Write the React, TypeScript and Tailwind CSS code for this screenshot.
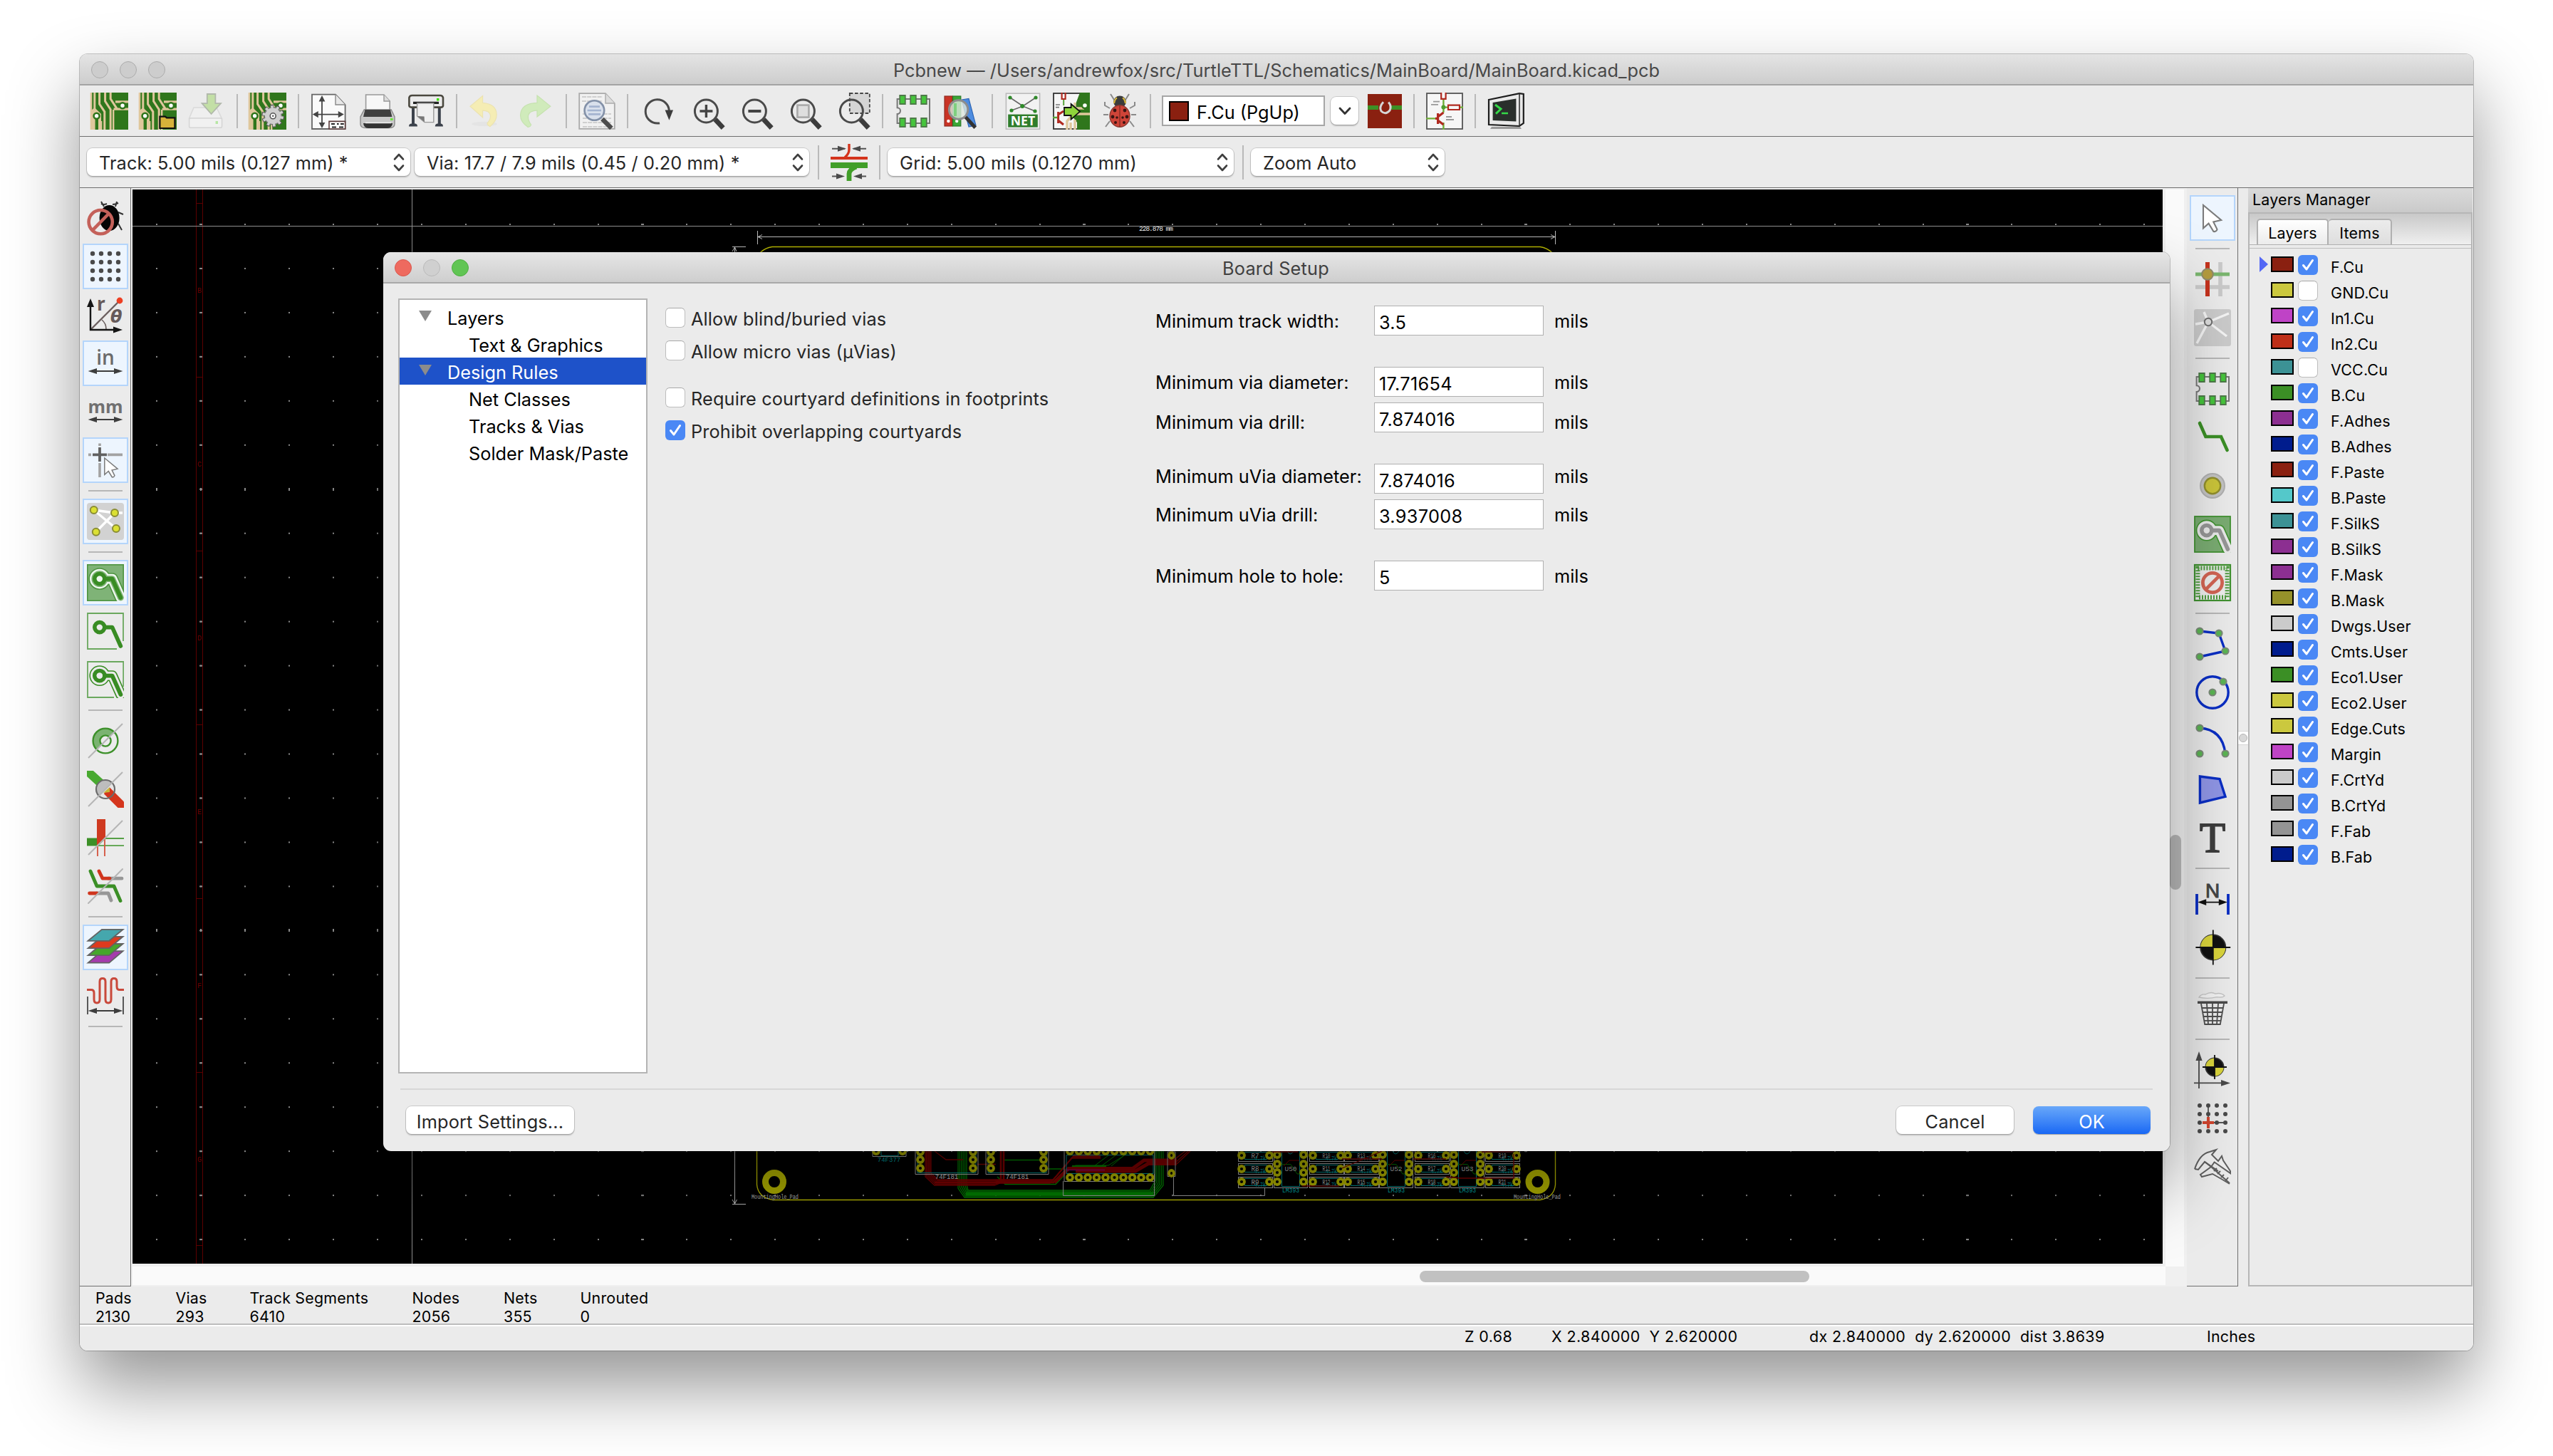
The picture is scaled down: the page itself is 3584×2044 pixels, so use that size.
import React from 'react';

type P = { children?: React.ReactNode };

const Svg = ({ children }: P) => (
  <svg viewBox="0 0 26 26" className="size-[52px] shrink-0 overflow-visible" fill="none">
    {children}
  </svg>
);

/* ---------- shared drawing parts ---------- */

const BoardArt = () => (
  <g>
    <rect width="26" height="26" fill="#2f761c" />
    <g stroke="#dfc79c" strokeWidth="1.5">
      <path d="M2.4 0V13M5.8 0V8l3.6 5.4V26M9.8 0V6l3.8 5.8V26M13.6 0V4.4l4.4 6.8" />
      <path d="M0 0V26M3.8 18V26M7 20V26" strokeWidth="1.3" />
      <path d="M15.8 11.6H26M17 6.4H26" strokeWidth="1.6" />
      <path d="M15.6 12V26" strokeWidth="1.2" />
    </g>
    <path d="M0 12.5L2.4 10.5L7 15V26H5V18H2.8V26H0Z" fill="#dfc79c" />
    <path d="M3.8 17V26" stroke="#2f761c" strokeWidth="1.6" />
    <circle cx="22" cy="9.1" r="2" fill="#fff" stroke="#2f761c" strokeWidth="1.3" />
    <circle cx="3.8" cy="16.4" r="2" fill="#fff" stroke="#2f761c" strokeWidth="1.3" />
  </g>
);

const Lens = () => (
  <g>
    <circle cx="12.700" cy="13" r="8" stroke="#4a4a4a" strokeWidth="1.5" />
    <path d="M19 18.8L24.600 24.8" stroke="#3c3c3c" strokeWidth="3.4" />
  </g>
);

const Chip = () => (
  <g>
    <path d="M1.8 4.5H24.5V21.5H1.8V15a2.2 2.2 0 0 0 0-4.400Z" stroke="#777" strokeWidth="1" />
    <g fill="#46c53c" stroke="#4d7a48" strokeWidth=".9">
      <path d="M3.6 2H7.400V8H3.6ZM11.100 2H14.900V8H11.100ZM18.600 2H22.400V8H18.600ZM3.6 18H7.400V24H3.6ZM11.100 18H14.900V24H11.100ZM18.600 18H22.400V24H18.600Z" />
    </g>
  </g>
);

const Pointer = ({ x = 0, y = 0, s = 1 }: { x?: number; y?: number; s?: number }) => (
  <path
    transform={`translate(${x} ${y}) scale(${s})`}
    d="M0 0V15.400L3.600 12.200L6.900 17.600Q8.700 18 9.300 16.200L6.800 11.200L12 10Z"
    fill="#fff"
    stroke="#7b7b7b"
    strokeWidth="1"
  />
);

const Target = ({ cx, cy, r, ex }: { cx: number; cy: number; r: number; ex: number }) => (
  <g transform={`translate(${cx} ${cy})`}>
    <circle r={r} fill="#111" stroke="#333" strokeWidth=".9" />
    <path d={`M0 0V${-r}A${r} ${r} 0 0 0 ${-r} 0ZM0 0V${r}A${r} ${r} 0 0 0 ${r} 0Z`} fill="#d9d43c" />
    <path d={`M0 ${-ex}V${ex}M${-ex} 0H${ex}`} stroke="#111" strokeWidth=".9" />
  </g>
);

const ZoneTrace = ({ c, w = 2.8 }: { c: string; w?: number }) => (
  <g stroke={c} strokeWidth={w}>
    <circle cx="8.900" cy="10.300" r="3.500" />
    <path d="M12.500 10.300H17.800L23.700 23.500" strokeLinecap="round" strokeLinejoin="round" />
  </g>
);

/* clips wide halo strokes to the icon square */
const Clip = ({ children }: P) => (
  <svg width="26" height="26" viewBox="0 0 26 26" overflow="hidden">
    {children}
  </svg>
);

const Slash = () => <path d="M1 25L25 1" stroke="#b5b5b5" strokeWidth="1" />;
const Node = ({ x, y }: { x: number; y: number }) => (
  <circle cx={x} cy={y} r="2.300" fill="#5ab552" stroke="#7c8a7a" strokeWidth="1" />
);
const HArrow = ({ y, c = '#3d3d3d' }: { y: number; c?: string }) => (
  <g>
    <path d={`M4 ${y}H22`} stroke={c} strokeWidth="1" />
    <path d={`M.8 ${y}L7 ${y - 2}V${y + 2}ZM25.200 ${y}L19 ${y - 2}V${y + 2}Z`} fill={c} />
  </g>
);

/* ---------- top toolbar icons ---------- */

const top: Record<string, React.ReactNode> = {
  board: <BoardArt />,
  open: (
    <g>
      <BoardArt />
      <path d="M14.200 16.800H18L19 17.700H24.700V25H14.200Z" fill="#d6b23a" stroke="#111" strokeWidth="1.100" />
    </g>
  ),
  save: (
    <g>
      <path d="M4 10.500H20L23.600 18H.8Z" fill="#efefef" stroke="#dadada" strokeWidth=".8" />
      <rect x=".8" y="18" width="23" height="6.600" rx="1" fill="#f1f1f1" stroke="#d6d6d6" strokeWidth=".8" />
      <rect x="19.300" y="20" width="1.700" height="2" fill="#b7e6a4" />
      <path d="M13.400 1H19.200V7.600H23L16.300 15L9.800 7.600H13.400Z" fill="#c3dfa6" stroke="#b1b8ab" strokeWidth=".9" />
    </g>
  ),
  setup: (
    <g>
      <BoardArt />
      <circle cx="16.600" cy="16.400" r="6.300" stroke="#555" strokeWidth="3.400" strokeDasharray="2.300 1.660" />
      <circle cx="16.600" cy="16.400" r="6" fill="#cfcfcf" stroke="#777" strokeWidth=".8" />
      <circle cx="16.600" cy="16.400" r="6.300" stroke="#cfcfcf" strokeWidth="2.200" strokeDasharray="1.700 2.260" strokeDashoffset="-.3" />
      <circle cx="16.600" cy="16.400" r="2" fill="#fff" stroke="#555" strokeWidth=".8" />
      <circle cx="16.600" cy="16.400" r=".6" fill="#555" />
    </g>
  ),
  page: (
    <g>
      <path d="M1 1.300H17.500L24.300 8.500V25.500H1Z" fill="#fafafa" stroke="#666" strokeWidth=".9" />
      <path d="M17.500 1.300V8.500H24.300" fill="#e8e8e8" stroke="#888" strokeWidth=".7" />
      <path d="M8 4V23M3.500 15.300H21" stroke="#444" strokeWidth=".9" />
      <path d="M8 2L10.200 6.200H5.800ZM8 25L10.200 21H5.800ZM1.400 15.300L5.400 13V17.600ZM23.400 15.300L19.400 13V17.600Z" fill="#444" />
      <path d="M13 20.200H24.300V25.500H13Z" fill="#fff" stroke="#5b3a3a" strokeWidth=".8" />
      <path d="M14.500 22H17M18.500 22H19.800M21 22H23.400M15 24.200H18M20 24.200H23" stroke="#222" strokeWidth="1" />
    </g>
  ),
  print: (
    <g>
      <path d="M4.800 13V1.500H17.500L21.600 6V13Z" fill="#f7f7f7" stroke="#999" strokeWidth=".8" />
      <path d="M17.500 1.500V6H21.600" stroke="#999" strokeWidth=".7" fill="#ddd" />
      <path d="M3.600 12H22.600L25 17V22Q25 24.800 21 24.800H5Q1 24.800 1 22V17Z" fill="#c9c9c9" stroke="#8a8a8a" strokeWidth=".7" />
      <path d="M4.200 12H22L23.200 17H3Z" fill="#3f3f3f" />
      <path d="M3 21.500H23.600Q23 25 20 25H6.500Q3.500 25 3 21.500Z" fill="#333" />
      <path d="M4.500 21.200H22.500" stroke="#eee" strokeWidth=".9" />
      <rect x="22" y="18" width="1.800" height="1.500" fill="#6de53e" />
    </g>
  ),
  plot: (
    <g>
      <path d="M4 10V23M22.400 10V23" stroke="#3c424c" strokeWidth="2" />
      <path d="M1 23.800Q1 21.800 3 21.800H5.500Q7 22 7 23.800ZM19.400 23.800Q19.400 22 21 21.800H23.500Q25 22 25 23.800Z" fill="#3c424c" />
      <path d="M1.200 3.500Q1.600 2 3.200 2H23Q24.600 2 25 3.500V9.300Q24.700 10.300 23.500 10.300H2.700Q1.400 10.300 1.200 9.300Z" fill="#ececec" stroke="#4a483f" strokeWidth="1.300" />
      <path d="M4 7.200H22" stroke="#222" strokeWidth="1.700" />
      <path d="M6.800 7.500H18.400V20.800H12L6.800 16.500Z" fill="#efefef" stroke="#999" strokeWidth=".7" />
      <path d="M12 20.600L11.800 16.800L7 16.500Z" fill="#777" />
      <rect x="20.500" y="4" width="1.700" height="1.700" fill="#3be000" />
    </g>
  ),
  undo: (
    <g>
      <ellipse cx="11" cy="22" rx="9" ry="1.600" fill="#e4e4e4" />
      <path d="M9.800 2.300V7.200Q19.600 8 19.600 15.600Q19.600 20 15 23.800Q13 22.900 13 21.500Q15.700 18.500 15.200 15.800Q14.500 12.700 9.800 12.600V17.400L1 9.600Z" fill="#f5edb4" stroke="#ece3b0" strokeWidth=".6" />
    </g>
  ),
  redo: (
    <g>
      <path d="M14 2L23.400 9.600L14 17V12.400Q8.400 12.700 7.800 16Q7.400 19.500 9.800 22.500Q9.500 24 7.600 24.200Q2 20.500 2.300 15.500Q3 7.500 14 7.200Z" fill="#d0ebbb" stroke="#c6e2b0" strokeWidth=".6" />
    </g>
  ),
  find: (
    <g>
      <path d="M.6.6H19L25.400 7.500V25.400H.6Z" fill="#f1f1f1" stroke="#aaa" strokeWidth=".9" />
      <path d="M19 .6V7.500H25.400" stroke="#aaa" strokeWidth=".7" fill="#ddd" />
      <path d="M2.500 3H17M2.500 6H17M3 15H23M3 18H23M3 21H23M3 24H20" stroke="#c4c4c4" strokeWidth=".8" strokeDasharray="3 .6" />
      <circle cx="11.200" cy="12.500" r="6.900" fill="#d9e0ec" stroke="#8391a8" strokeWidth="1.300" />
      <path d="M7.500 9.800H15M6.300 12.500H16M7 15.200H15.500" stroke="#a5b4d0" strokeWidth="1.300" />
      <path d="M16.700 18.500L23.200 25" stroke="#4d4d4d" strokeWidth="3.200" />
    </g>
  ),
  refresh: (
    <g>
      <path d="M14 21.400Q13.300 21.600 12.500 21.500A8.300 8.300 0 1 1 20.700 13" stroke="#4a4a4a" strokeWidth="1.500" />
      <path d="M17.800 12.300H23.500L20.700 19.400Z" fill="#3c3c3c" />
    </g>
  ),
  zin: (
    <g>
      <Lens />
      <path d="M12.700 8.500V17.500M8.200 13H17.200" stroke="#444" strokeWidth="1.700" />
    </g>
  ),
  zout: (
    <g>
      <Lens />
      <path d="M8.200 13H17.200" stroke="#444" strokeWidth="1.900" />
    </g>
  ),
  zfit: (
    <g>
      <Lens />
      <rect x="8.700" y="8.800" width="8" height="8.500" stroke="#aaa" strokeWidth="1.300" fill="#dedede" />
    </g>
  ),
  zsel: (
    <g>
      <rect x="11.400" y=".5" width="14" height="14" fill="#d5d5d5" stroke="#444" strokeWidth=".9" strokeDasharray="2.300 1.300" />
      <Lens />
    </g>
  ),
  chip: <Chip />,
  lib: (
    <g>
      <rect x="1" y="2.500" width="5.500" height="21" fill="#c93325" stroke="#8f2a20" strokeWidth=".6" />
      <rect x="6.800" y="2.500" width="5.600" height="21" fill="#3ba636" stroke="#2c7a29" strokeWidth=".6" />
      <path d="M13 5L18 4.200L23 23L18 24Z" fill="#4d8ce0" stroke="#2e66b5" strokeWidth=".6" />
      <circle cx="3.700" cy="20" r="1.100" fill="#fff" />
      <circle cx="9.600" cy="20" r="1.100" fill="#fff" />
      <circle cx="10.800" cy="12" r="6.600" fill="#dfe9df" fillOpacity=".8" stroke="#8d8d8d" strokeWidth="1.500" />
      <path d="M8.500 7.500V16.500" stroke="#7fcf7f" strokeWidth="2" />
      <path d="M15.800 17.200L22.600 24.600" stroke="#333" strokeWidth="2.500" />
    </g>
  ),
  net: (
    <g>
      <rect x="1.200" y=".6" width="23.600" height="25" fill="#f2f2f2" stroke="#bbb" strokeWidth=".8" />
      <path d="M4 3.500L13 9.500L22 3.500M5 12.500L13 9.500L21.500 13" stroke="#666" strokeWidth=".8" />
      <g fill="#2f8a2a">
        <circle cx="4" cy="3.500" r="1.300" />
        <circle cx="22" cy="3.500" r="1.300" />
        <circle cx="12.600" cy="9.500" r="1.500" />
        <circle cx="5" cy="12.500" r="1.300" />
        <circle cx="21.500" cy="13" r="1.300" />
      </g>
      <rect x="2.600" y="15.300" width="20.800" height="9" fill="#2f7d2b" />
      <text x="13" y="23" fontSize="8.800" fontWeight="700" textAnchor="middle" fill="#fff" fontFamily="Open Sans, sans-serif">NET</text>
    </g>
  ),
  update: (
    <g>
      <rect x=".5" y=".5" width="25" height="25" fill="#f6f6f6" stroke="#333" strokeWidth=".9" />
      <path d="M19 0H26V26H17V21L14 17L16 8Z" fill="#2f761c" />
      <path d="M10 26V20L14.500 15H26M12.500 26V21M15.500 26V19M22 11L15.500 11V7" stroke="#dfc79c" strokeWidth="1.700" />
      <circle cx="22.500" cy="9" r="2" fill="#fff" stroke="#2f761c" strokeWidth="1.200" />
      <path d="M6.300 0V4.500H8.800V0" stroke="#b02a20" strokeWidth="1.100" />
      <path d="M7.600 5V9" stroke="#58a33b" strokeWidth="1" />
      <path d="M2 8.500H5M2 10.300H4.500" stroke="#777" strokeWidth=".8" />
      <path d="M0 17.500H3" stroke="#58a33b" strokeWidth="1.200" />
      <path d="M3.800 13.500V21.500M3.800 15.500L7.500 13M3.800 19.500L7.500 22.500" stroke="#b02a20" strokeWidth="1.500" />
      <path d="M8 10.500H12.800V8L19 13.300L12.800 18.800V16H8Z" fill="#8fd43c" stroke="#111" strokeWidth=".9" />
    </g>
  ),
  bug: (
    <g>
      <path d="M9 5L6.500 1M17 5L19.500 1M6 11L2.500 9V6.500M20 11L23.500 9V6.500M5 15.500H1.500M21 15.500H24.500M6 20L3 24M20 20L23 24" stroke="#8a8a8a" strokeWidth="1" />
      <ellipse cx="13" cy="6.500" rx="4.400" ry="4.200" fill="#3c3c3c" />
      <path d="M9 7.500Q9.500 4.500 11 3.800M17 7.500Q16.500 4.500 15 3.800" stroke="#d8b93a" strokeWidth="1.100" />
      <ellipse cx="13" cy="16.500" rx="7" ry="7.600" fill="#cf4438" stroke="#8b3a32" strokeWidth=".7" />
      <path d="M13 9V24" stroke="#7a2a22" strokeWidth=".6" />
      <g fill="#3a1512">
        <circle cx="9.500" cy="12.500" r="1.200" />
        <circle cx="16.500" cy="12.500" r="1.200" />
        <circle cx="8" cy="17" r="1.200" />
        <circle cx="18" cy="17" r="1.200" />
        <circle cx="11" cy="17.500" r=".9" />
        <circle cx="15" cy="17.500" r=".9" />
        <circle cx="10" cy="21" r="1" />
        <circle cx="16" cy="21" r="1" />
      </g>
    </g>
  ),
  copper: (
    <g>
      <rect x="1" y="1" width="24" height="24" fill="#8a2010" />
      <path d="M1 10.500H25" stroke="#3d8f25" strokeWidth="3" />
      <rect x="8.500" y="8" width="9" height="6" fill="#8a2010" />
      <path d="M12 6.600Q8.800 10 10.500 13Q13.500 16 16.500 12.500Q18 9.500 15.600 6.800" stroke="#d6d6d6" strokeWidth="1.500" />
    </g>
  ),
  sch: (
    <g>
      <rect x=".5" y=".5" width="25" height="25" fill="#f6f6f6" stroke="#555" strokeWidth=".9" />
      <path d="M12.200 4.500V14M12.200 10.300H26M12.200 21V26M0 18.200H7" stroke="#6fae36" strokeWidth="1.200" />
      <circle cx="12.200" cy="10.300" r="1.500" fill="#4f9d2f" />
      <path d="M10.600 0V4.400H13.800V0M15.500 8.800H23.500V12H15.500Z" stroke="#b02a20" strokeWidth="1.100" fill="#f6f6f6" />
      <path d="M8.300 14.500V22M8.300 17L12.200 14M8.300 19.500L12.200 22.500M6.500 18.200H8" stroke="#b02a20" strokeWidth="1.600" />
      <path d="M5 6.300H9.500M3.500 8.400H8.500M14 17H18M14 19H19.500" stroke="#999" strokeWidth=".9" />
    </g>
  ),
  term: (
    <g>
      <path d="M3 24H23L24 25.500H2Z" fill="#999" />
      <path d="M1 5L22.500.6L25.400 1V21.500L22.500 23.500L1 22.500Z" fill="#e9e9e9" stroke="#1c1c1c" strokeWidth="1.100" />
      <path d="M22.500 .6V23.500" stroke="#333" strokeWidth=".8" />
      <path d="M3.800 7L20.200 4.300V20.200L3.800 19.500Z" fill="#2a2f2c" />
      <path d="M5.500 8.500L9.500 11.500L6 14.800" stroke="#35d948" strokeWidth="1.500" />
      <path d="M10 14.500H14.500" stroke="#35d948" strokeWidth="1.300" />
    </g>
  ),
  diff: (
    <g>
      <path d="M0 10H26" stroke="#d4341c" strokeWidth="2" />
      <path d="M0 15H26" stroke="#419f29" strokeWidth="4" />
      <path d="M13 0V4Q13 7 10 9.500" stroke="#d4341c" strokeWidth="1.700" />
      <path d="M18 16Q13 18 13 21V26" stroke="#419f29" strokeWidth="3.400" />
      <path d="M1 3.400H10M16 3.400H25M1 22.700H8M18 22.700H25" stroke="#555" strokeWidth="1" />
      <path d="M5 1.400L11 3.400L5 5.400ZM21 1.400L15 3.400L21 5.400ZM4 20.700L10 22.700L4 24.700ZM22 20.700L16 22.700L22 24.700Z" fill="#4a4a4a" />
    </g>
  ),
};

/* ---------- left toolbar icons ---------- */

const dots = [4, 10, 16, 22];

const left: Record<string, React.ReactNode> = {
  drc: (
    <g>
      <path d="M12 5L10 1.500M20 5L21 1.500M9 7L6 8M22 9L25.500 10.500M22 17L24.500 21.500M14 3Q12 4 10 3M18 3.500Q20 3.500 22 2.500" stroke="#333" strokeWidth="1" />
      <ellipse cx="15.800" cy="13" rx="7" ry="9" fill="#050505" />
      <circle cx="9.600" cy="15.800" r="8.300" stroke="#c4615a" strokeWidth="2.300" />
      <path d="M4 21.600L15.300 10" stroke="#c4615a" strokeWidth="2.300" />
    </g>
  ),
  grid: (
    <g fill="#4a4a4a">
      {dots.map((y) => dots.map((x) => <circle key={`${x}-${y}`} cx={x} cy={y} r="1.600" />))}
    </g>
  ),
  polar: (
    <g>
      <path d="M2.500 23.500L22 4" stroke="#6b6060" strokeWidth="1.200" />
      <path d="M10.500 16.500Q13.500 19 13.500 23" stroke="#6b6060" strokeWidth=".8" />
      <path d="M2.500 5V23.500H20" stroke="#151515" strokeWidth="1.200" />
      <path d="M2.500 1.500L5 7.500H0ZM25 23.500L18.500 21.300V25.700Z" fill="#151515" />
      <circle cx="23" cy="3" r="2.200" fill="#ee4023" />
      <text x="7" y="10" fontSize="13" fontWeight="700" fill="#655a5a" fontFamily="Open Sans, sans-serif">r</text>
      <text x="16.500" y="18.600" fontSize="12" fontWeight="700" fontStyle="italic" fill="#655a5a" fontFamily="DejaVu Sans, sans-serif">θ</text>
    </g>
  ),
  inch: (
    <g>
      <text x="13" y="14" fontSize="14" fontWeight="600" textAnchor="middle" fill="#6b6b6b" fontFamily="Open Sans, sans-serif">in</text>
      <HArrow y={18.500} />
    </g>
  ),
  mm: (
    <g>
      <text x="13" y="14" fontSize="12.500" fontWeight="700" textAnchor="middle" fill="#707070" fontFamily="Open Sans, sans-serif">mm</text>
      <HArrow y={18.500} />
    </g>
  ),
  cursor: (
    <g>
      <path d="M1 9.200H3M14.500 9.200H25M9 1.300V3M9 15V25" stroke="#a2a2a2" strokeWidth="1.800" />
      <path d="M4 9.200H14M9 4V14" stroke="#606060" strokeWidth="1.900" />
      <Pointer x={12.400} y={11.500} s={0.760} />
    </g>
  ),
  rats: (
    <g>
      <rect width="26" height="26" rx="2" fill="#d2d2d2" />
      <path d="M4.800 5L20.500 18M6.300 20.400L19.500 7M4.800 5L19.500 7H25" stroke="#fff" strokeWidth="1.700" />
      {[[4.900, 5], [19.500, 7], [6.400, 20.400], [20.500, 18]].map(([x, y]) => (
        <circle key={`${x}`} cx={x} cy={y} r="2.500" fill="#dbe033" stroke="#8a8d33" strokeWidth="1" />
      ))}
    </g>
  ),
  zfill: (
    <Clip>
      <rect x=".4" y=".4" width="25.200" height="25.200" fill="#7fb377" stroke="#4d9440" strokeWidth=".8" />
      <ZoneTrace c="#4d9440" w={8.400} />
      <ZoneTrace c="#eef7ee" w={6.800} />
      <ZoneTrace c="#7fb377" w={4.400} />
      <ZoneTrace c="#388c23" />
      <circle cx="8.900" cy="10.300" r="2.100" fill="#eef7ee" />
    </Clip>
  ),
  znone: (
    <g>
      <path d="M25.500 20V.5H.5V25.500H21" stroke="#6aa85e" strokeWidth=".9" />
      <ZoneTrace c="#388c23" />
    </g>
  ),
  zoutl: (
    <Clip>
      <path d="M25.600 18V.5H.5V25.500H19" stroke="#6aa85e" strokeWidth=".9" />
      <ZoneTrace c="#388c23" w={7.400} />
      <ZoneTrace c="#ebebeb" w={5.800} />
      <ZoneTrace c="#388c23" w={2.900} />
      <circle cx="8.900" cy="10.300" r="2.100" fill="#ebebeb" />
    </Clip>
  ),
  pad: (
    <g>
      <path d="M6.600 19.400A9 9 0 0 1 19.400 6.600L15.800 10.200A4 4 0 0 0 10.200 15.800Z" fill="#7bb371" />
      <circle cx="13" cy="13" r="8.700" stroke="#3c9029" strokeWidth="1.200" />
      <circle cx="13" cy="13" r="3.800" stroke="#3c9029" strokeWidth="1.200" />
      <Slash />
    </g>
  ),
  via: (
    <Clip>
      <path d="M0 0L11 10" stroke="#48a930" strokeWidth="6" />
      <circle cx="13" cy="13" r="6.500" fill="#e6e6e6" />
      <path d="M8.300 17.700A6.700 6.700 0 0 1 17.700 8.300Z" fill="#bdbdbd" />
      <path d="M14 14L27 27" stroke="#d4351d" strokeWidth="6" />
      <path d="M11.500 15.500L16 11.500V15Z" fill="#c6b53a" />
      <circle cx="13" cy="13" r="6.500" stroke="#6b6b6b" strokeWidth="1.100" />
      <Slash />
    </Clip>
  ),
  track: (
    <g>
      <path d="M0 13.200H13.500L8 18.800H0Z" fill="#3b8f26" />
      <path d="M13 13.500H26M8 18.600H26" stroke="#56a046" strokeWidth=".9" />
      <path d="M7 0H13V13L7 19Z" fill="#cf3a20" />
      <path d="M7.500 18V26M12.500 13V26" stroke="#d4533d" strokeWidth=".9" />
      <Slash />
    </g>
  ),
  contrast: (
    <g strokeWidth="2.400" strokeLinecap="round" strokeLinejoin="round">
      <path d="M15 7.600H24.500M7 18H15L17 23" stroke="#979797" />
      <path d="M8.500 2.500L11 7.600H16M1.800 18H7" stroke="#d0351d" />
      <path d="M2.500 2.500L7 13H19L23.500 23.300" stroke="#3b8f26" />
      <Slash />
    </g>
  ),
  layers: (
    <g stroke="#636363" strokeWidth=".9">
      <path d="M.8 23.800L10.500 15.600H25.300L15.600 23.800Z" fill="#a53bad" />
      <path d="M.8 18.600L10.500 10.500H25.300L15.600 18.600Z" fill="#45a62b" />
      <path d="M.8 13.600L10.500 5.400H25.300L15.600 13.600Z" fill="#dd3a1e" />
      <path d="M.8 8.400L10.500.4H25.300L15.600 8.400Z" fill="#45a7ad" />
    </g>
  ),
  meander: (
    <g>
      <path d="M0 8.800H3Q5 8.800 5 11V15.500Q5 18 7 18T9 15.500V3Q9 .8 11 .8T13 3V15.500Q13 18 15 18T17 15.500V3Q17 .8 19 .8T21 3V6.500Q21 8.800 23 8.800H26" stroke="#c9493b" strokeWidth="1.500" />
      <path d="M.5 13.500V26M25.500 13.500V26" stroke="#4a4a4a" strokeWidth=".9" />
      <HArrow y={23.500} />
    </g>
  ),
};

/* ---------- right toolbar icons ---------- */

const right: Record<string, React.ReactNode> = {
  arrow: <Pointer x={6.500} y={4} s={1.050} />,
  hilite: (
    <g>
      <path d="M18.500 1V25M1 18.500H25" stroke="#c9c9c9" strokeWidth="2.800" />
      <path d="M9.500 1V25" stroke="#c4321d" strokeWidth="3" />
      <path d="M1 9.500H25" stroke="#79b56e" strokeWidth="2.600" />
      <circle cx="9.500" cy="9.500" r="3.900" fill="#b39b3e" stroke="#8f8a6a" strokeWidth="1" />
    </g>
  ),
  localrats: (
    <g>
      <rect width="26" height="26" rx="1.600" fill="#cbcbcb" />
      <path d="M10 9L7 2M10 9L24.500 3M10 9L23 19M10 9L2 24M10 9L1 10.500" stroke="#f4f4f4" strokeWidth="1.700" />
      <circle cx="10" cy="9" r="2.600" fill="#dcdcdc" stroke="#6f6f6f" strokeWidth="1" />
    </g>
  ),
  chip: <Chip />,
  route: <path d="M4 3L8.200 12.500H19L23.300 22" stroke="#3b8f26" strokeWidth="2.300" strokeLinecap="round" />,
  via: (
    <g>
      <circle cx="13" cy="13" r="8.500" fill="#c3c3c3" stroke="#b0b0b0" strokeWidth="1" />
      <circle cx="13" cy="13" r="5.600" fill="#cbc53a" stroke="#918f2e" strokeWidth="1.200" />
    </g>
  ),
  zone: (
    <Clip>
      <rect x=".5" y=".5" width="25" height="25" fill="#7aac72" stroke="#419231" strokeWidth=".9" />
      <ZoneTrace c="#419231" w={8} />
      <ZoneTrace c="#e9e9e9" w={6.400} />
      <ZoneTrace c="#969696" />
      <circle cx="8.900" cy="10.300" r="2" fill="#e9e9e9" />
    </Clip>
  ),
  keepout: (
    <g>
      <rect x=".5" y=".5" width="25" height="25" fill="#ededed" stroke="#419231" strokeWidth="1.100" />
      <rect x="2.700" y="2.700" width="20.600" height="20.600" stroke="#4f9d40" strokeWidth="3" strokeDasharray="1 1" />
      <circle cx="13" cy="13" r="8.600" fill="#ededed" />
      <circle cx="13" cy="13" r="6.800" stroke="#d26454" strokeWidth="2.400" />
      <path d="M8.300 17.700L17.700 8.300" stroke="#d26454" strokeWidth="2.400" />
    </g>
  ),
  line: (
    <g>
      <path d="M4 4L17.500 5.500L22 18L4 22" stroke="#0a2ec4" strokeWidth="1.700" />
      <Node x={4} y={4} /><Node x={17.500} y={5.500} /><Node x={22} y={18} /><Node x={4} y={22} />
    </g>
  ),
  circle: (
    <g>
      <circle cx="13" cy="13" r="11.100" stroke="#0a2ec4" strokeWidth="1.700" />
      <Node x={13} y={13} /><Node x={20.500} y={5.500} />
    </g>
  ),
  arc: (
    <g>
      <path d="M4 4Q20 5 22 22" stroke="#0a2ec4" strokeWidth="1.700" />
      <Node x={4} y={4} /><Node x={4} y={22} /><Node x={22} y={22} />
    </g>
  ),
  poly: <path d="M4.200 4L18 5.800L22 18.200L4.200 22.500Z" fill="#9096e6" stroke="#0a2ec4" strokeWidth="1.700" />,
  text: <text x="13" y="23" fontSize="29.500" textAnchor="middle" fill="#3d3d3d" stroke="#3d3d3d" strokeWidth=".9" fontFamily="Liberation Serif, serif">T</text>,
  dim: (
    <g>
      <text x="13" y="12" fontSize="14" textAnchor="middle" fill="#444" stroke="#444" strokeWidth=".5" fontFamily="Liberation Sans, sans-serif">N</text>
      <path d="M2 9.500V24M24 9.500V24" stroke="#0a2ec4" strokeWidth="1.900" />
      <path d="M5 15.300H21" stroke="#111" strokeWidth=".9" />
      <path d="M2.600 15.300L8.600 13.100V17.500ZM23.400 15.300L17.400 13.100V17.500Z" fill="#111" />
    </g>
  ),
  target: <Target cx={13.400} cy={13} r={8.800} ex={12.200} />,
  trash: (
    <g>
      <path d="M3.500 5Q5 2.500 8 3Q12 .8 15 2.600Q19 1.500 21.500 4Q20 5.500 16 4.800Q10 6.500 3.500 5Z" fill="#f2f2f2" stroke="#c4c4c4" strokeWidth=".7" />
      <path d="M2.500 8.600H23.500" stroke="#4a4a4a" strokeWidth="1.700" />
      <path d="M5 9.500L7.600 24H18.400L21 9.500M5.500 12.500H20.500M6 15.500H20M6.600 18.500H19.400M7 21.400H19M9 9.500L10 24M13 9.500V24M17 9.500L16 24" stroke="#4f4f4f" strokeWidth=".9" />
    </g>
  ),
  origin: (
    <g>
      <path d="M3.500 5V26M0 22.200H21" stroke="#4a4a4a" strokeWidth=".9" />
      <path d="M3.500 0L5.800 6.500H1.200ZM25.500 22.200L19 20V24.400Z" fill="#4a4a4a" />
      <Target cx={14.500} cy={11} r={6.300} ex={8.500} />
    </g>
  ),
  gridorg: (
    <g fill="#4a4a4a">
      <path d="M10 4V16H22" stroke="#555" strokeWidth=".9" fill="none" />
      {dots.map((y) => dots.map((x) => <circle key={`${x}-${y}`} cx={x} cy={y} r="1.500" />))}
      <path d="M6 16H14M10 12V20" stroke="#d2452f" strokeWidth="2" />
    </g>
  ),
  caliper: (
    <g stroke="#5f5f5f" strokeWidth="1" fill="#efefef">
      <path d="M.5 14.500Q4 4 11 2.500L15.500 1L12.500 4.500L17 9L19.500 5.500L20.500 8.500L25.500 16V17.500L14 9.500" />
      <path d="M.5 14.500L3 15L7.500 9.500L12 13L4.500 18.500L5.500 20L13 18L20 22L25 25" />
      <path d="M12 13L25 24.500M14.500 9.500L12 13M16 14L14 16M18.500 16L16.500 18M21 18.500L19 20.500M24 20.500L22 23M7.500 9.500L17 16" fill="none" />
    </g>
  ),
};

const VSep = () => <div className="h-[48px] w-[2px] bg-[#b9b9b9]" />;

const topItems = ['board', 'open', 'save', '|', 'setup', '|', 'page', 'print', 'plot', '|', 'undo', 'redo', '|', 'find', '|', 'refresh', 'zin', 'zout', 'zfit', 'zsel', '|', 'chip', 'lib', '|', 'net', 'update', 'bug', '|'];

const leftItems = ['drc', '*grid', 'polar', '*inch', 'mm', '*cursor', '|', '*rats', '|', '*zfill', 'znone', 'zoutl', '|', 'pad', 'via', 'track', 'contrast', '|', '*layers', 'meander', '|'];

const rightItems = ['*arrow', '|', 'hilite', 'localrats', '|', 'chip', 'route', 'via', 'zone', 'keepout', '|', 'line', 'circle', 'arc', 'poly', 'text', '|', 'dim', 'target', '|', 'trash', '|', 'origin', 'gridorg', 'caliper'];

const Column = ({ items, icons }: { items: string[]; icons: Record<string, React.ReactNode> }) => (
  <>
    {items.map((k, i) =>
      k === '|' ? (
        <div key={i} className="my-[6px] h-[2px] w-[48px] shrink-0 bg-[#b7b7b7]" />
      ) : (
        <div
          key={i}
          className={
            k[0] === '*'
              ? 'flex size-[64px] shrink-0 items-center justify-center border-2 border-[#b4d5fb] bg-[#edf5fe]'
              : 'flex size-[64px] shrink-0 items-center justify-center'
          }
        >
          <Svg>{icons[k.replace('*', '')]}</Svg>
        </div>
      ),
    )}
  </>
);

const Stepper = () => (
  <svg viewBox="0 0 16 26" className="h-[26px] w-[16px]" fill="none" stroke="#3f3f3f" strokeWidth="2.600" strokeLinecap="round" strokeLinejoin="round">
    <path d="M2 8.500L8 2L14 8.500M2 17.500L8 24L14 17.500" />
  </svg>
);

const Select = ({ w, children }: P & { w: string }) => (
  <div className={`flex h-[39px] items-center justify-between rounded-[8px] bg-white pr-[8px] pl-[17px] text-[25.3px] shadow-[0_0_0_1px_rgba(0,0,0,0.14),0_2px_2px_rgba(0,0,0,0.2)] ${w}`}>
    <span className="pt-[3px] leading-[36px] whitespace-pre text-[#262626]">{children}</span>
    <Stepper />
  </div>
);

const Check = ({ on }: { on: boolean }) =>
  on ? (
    <div className="flex size-[28px] shrink-0 items-center justify-center rounded-[6px] bg-[#4a88f5]">
      <svg viewBox="0 0 28 28" className="size-[28px]" fill="none" stroke="#fff" strokeWidth="3" strokeLinecap="round" strokeLinejoin="round">
        <path d="M7.500 14.500L12 20L20.500 7.500" />
      </svg>
    </div>
  ) : (
    <div className="size-[28px] shrink-0 rounded-[6px] border border-[#bdbdbd] border-t-[#a8a8a8] bg-white" />
  );

const layers: [string, string, boolean][] = [
  ['F.Cu', '#8a2010', true],
  ['GND.Cu', '#cbc83e', false],
  ['In1.Cu', '#bf43c6', true],
  ['In2.Cu', '#bf2f18', true],
  ['VCC.Cu', '#3c9295', false],
  ['B.Cu', '#3b8f25', true],
  ['F.Adhes', '#8c2f91', true],
  ['B.Adhes', '#001c8d', true],
  ['F.Paste', '#8a2010', true],
  ['B.Paste', '#54c8ca', true],
  ['F.SilkS', '#3c9295', true],
  ['B.SilkS', '#8c2f91', true],
  ['F.Mask', '#8c2f91', true],
  ['B.Mask', '#95912a', true],
  ['Dwgs.User', '#cbcbcb', true],
  ['Cmts.User', '#001c8d', true],
  ['Eco1.User', '#3b8f25', true],
  ['Eco2.User', '#cbc83e', true],
  ['Edge.Cuts', '#cbc83e', true],
  ['Margin', '#bf43c6', true],
  ['F.CrtYd', '#cbcbcb', true],
  ['B.CrtYd', '#949494', true],
  ['F.Fab', '#949494', true],
  ['B.Fab', '#001c8d', true],
];

/* ---------- board canvas ---------- */

const Pads = ({ xs, ys, rx = 5.500 }: { xs: number[]; ys: number[]; rx?: number }) => (
  <g>
    {xs.map((x) =>
      ys.map((y) => (
        <ellipse key={`${x}-${y}`} cx={x} cy={y} rx={rx - 1.500} ry="4" stroke="#adad00" strokeWidth="3.800" fill="#000" />
      )),
    )}
  </g>
);

const range = (n: number) => Array.from({ length: n }, (_, i) => i);

const Canvas = () => (
  <svg viewBox="186 266 2850 1508" className="h-[1508px] w-[2850px] shrink-0 bg-black" fill="none">
    <defs>
      <pattern id="dots" x="219" y="314" width="62" height="61.960" patternUnits="userSpaceOnUse">
        <rect width="2" height="2" fill="#8a8a8a" />
      </pattern>
    </defs>
    <rect x="186" y="266" width="2850" height="1508" fill="url(#dots)" />
    <g fill="#8a8a8a">
      {[280, 900, 1520, 2140, 2760].map((x) => range(24).map((r) => <rect key={`${x}-${r}`} x={x} y={314 + r * 61.960} width="4" height="2" />))}
      {range(46).map((c) => <rect key={c} x={219 + c * 62} y="685" width="2" height="4" />)}
      {range(46).map((c) => <rect key={c} x={219 + c * 62} y="1304" width="2" height="4" />)}
    </g>

    {/* drawing sheet frame */}
    <path d="M275.500 266V1774M284.500 266V1774M275 285.500H285M275 529.500H285M275 773.500H285M275 1017.500H285M275 1261.500H285M275 1505.500H285M275 1748.500H285" stroke="#5c0000" />
    <g fill="#6b0000" fontSize="10" fontFamily="Liberation Mono, monospace">
      {['B', 'C', 'D', 'E', 'F', 'G'].map((l, i) => (
        <text key={l} x="277" y={411 + i * 244}>{l}</text>
      ))}
    </g>
    <path d="M186 317.500H3036M578.500 266V1774" stroke="#8f8f8f" />

    {/* dimensions */}
    <g stroke="#bdbdbd">
      <path d="M1063.500 324V343M2183.500 324V343M1064 332.500H2183M1064 332.500L1070 329.500M1064 332.500L1070 335.500M2183 332.500L2177 329.500M2183 332.500L2177 335.500" />
      <path d="M1028 346.500H1047M1031.500 346V1690M1028 1690.500H1047M1031.500 347L1028 353M1031.500 347L1034 353M1031.500 1690L1028 1684M1031.500 1690L1034.500 1684" />
    </g>
    <text x="1623" y="324" fontSize="9.500" textLength="48" textAnchor="middle" fill="#f0f0f0" fontFamily="Liberation Mono, monospace">228.878 mm</text>

    {/* board outline */}
    <path d="M1062.500 367Q1064 350 1084 346.500H2162Q2182 350 2183.500 367V1663Q2182 1681 2162 1684.500H1085Q1064 1681 1062.500 1663Z" stroke="#b5b500" strokeWidth="1.400" />
    <g stroke="#b0b000" strokeWidth="9">
      <circle cx="1087" cy="1659" r="12.500" />
      <circle cx="2158.500" cy="1659" r="12.500" />
    </g>
    <g fill="#b8b8b8" fontSize="8.500" textAnchor="middle" fontFamily="Liberation Mono, monospace">
      <text x="1088" y="1683" textLength="66" lengthAdjust="spacingAndGlyphs">MountingHole_Pad</text>
      <text x="2158" y="1683" textLength="66" lengthAdjust="spacingAndGlyphs">MountingHole_Pad</text>
    </g>

    {/* bottom copper */}
    <g stroke="#008000">
      {range(6).map((i) => (
        <path key={i} d={`M${1345 + i * 2.400} 1610V${1668 - i}L${1354 + i} ${1681 - i * 2}H${1619 - i}L${1633 - i * 2.400} ${1664 - i}V1610`} strokeWidth="1.300" />
      ))}
      <path d="M1356 1676H1619" strokeWidth="5" />
      <path d="M1400 1652L1411 1662.500H1482L1494 1650M1404 1655L1412 1659.500H1478L1490 1648M1410 1628.500H1460M1470 1641H1494" strokeWidth="1.300" />
      <path d="M1500 1640L1510 1636H1556L1588 1616M1536 1637L1556 1622M1546 1637L1566 1622M1560 1637L1578 1622" />
      <path d="M1505 1637.500H1553" strokeWidth="3" />
    </g>

    {/* front copper */}
    <g stroke="#7d0000">
      {range(6).map((i) => (
        <path key={i} d={`M${1299 + i * 1.600} 1610V${1652 - i}L${1312 + i} ${1664 - i * 1.600}H${1396}L1404 ${1661 - i}H${1474 + i}L${1504 + i} ${1626 - i}H1545`} strokeWidth="1.300" />
      ))}
      <path d="M1312 1660H1480M1405 1660V1612M1409 1658V1612" strokeWidth="2.600" />
      <path d="M1312 1616L1328 1628H1352M1372 1634.500H1398" strokeWidth="1.300" />
      <path d="M1480 1660L1500 1640.500H1590L1606 1629H1652M1510 1644H1594L1612 1633.500H1652" strokeWidth="5" />
      <path d="M1648 1634L1668 1616M1652 1634L1671 1616M1643 1632L1664 1616" strokeWidth="1.500" />
    </g>
    <path d="M1497 1642.500H1551" stroke="#8a008a" />

    {/* DIP packages */}
    <g stroke="#a5a5a5">
      <path d="M1225 1610V1623.500H1272V1610M1285 1610V1648.500H1373V1610M1384 1610V1648.500H1472V1610M1494 1610V1658.500H1621V1610" />
      <path d="M1492.500 1658V1678.500H1620.500V1648M1647.500 1651V1678.500H1775.500V1667M1639 1617H1650V1651.500H1639Z" stroke="#9d9d9d" />
    </g>
    <g stroke="#008a8a">
      <path d="M1288 1610V1646.500H1370V1610M1387 1610V1646.500H1469V1610M1497 1621.500H1619V1647.500H1497ZM1237 1610V1622.500H1261V1610" />
    </g>
    <Pads xs={[1292, 1366, 1391, 1465]} ys={[1617, 1628, 1640]} />
    <Pads xs={[1230, 1267]} ys={[1616]} />
    <Pads xs={range(10).map((i) => 1502 + i * 12.500)} ys={[1616, 1653]} />
    <Pads xs={[1644.500]} ys={[1622, 1647]} rx={5} />

    {/* resistor and comparator array */}
    {[1738, 1838, 1887, 1986, 2085].map((x, c) => (
      <g key={x}>
        {[1615, 1633, 1652].map((y, r) => (
          <g key={y}>
            <rect x={x + 0.500} y={y + 0.500} width="48" height="15" stroke="#a5a5a5" />
            <path d={`M${x + 9.500} ${y + 2.500}H${x + 40.500}V${y + 12.500}H${x + 9.500}Z`} stroke="#008a8a" />
            <text x={x + 31} y={y + 14} fontSize="9" textLength="16" lengthAdjust="spacingAndGlyphs" textAnchor="middle" fill="#009c9c" fontFamily="Liberation Mono, monospace">4.7k</text>
            <text x={x + 24} y={y + 11} fontSize="10" textLength="11" lengthAdjust="spacingAndGlyphs" textAnchor="middle" fill="#b0b0b0" fontFamily="Liberation Mono, monospace">{`R${7 + c * 3 + r}`}</text>
          </g>
        ))}
        <Pads xs={[x + 5, x + 44]} ys={[1622, 1641, 1659]} />
      </g>
    ))}
    {[['U50', 1788], ['U52', 1936], ['U53', 2036]].map(([n, x0]) => {
      const x = Number(x0);
      return (
        <g key={n}>
          <path d={`M${x + 0.500} 1610V1667.500H${x + 47.500}V1610`} stroke="#a5a5a5" />
          <path d={`M${x + 11.500} 1616V1665.500H${x + 36.500}V1616M${x + 19} 1616Q${x + 23} 1624 ${x + 28} 1616`} stroke="#008a8a" />
          <path d={`M${x + 8} 1634.500H${x + 24}L${x + 33} 1648H${x + 40}`} stroke="#007000" />
          <path d={`M${x + 14} 1637L${x + 22} 1629H${x + 36}`} stroke="#7d0000" />
          <text x={x + 24} y="1644" fontSize="9.500" textAnchor="middle" fill="#b0b0b0" fontFamily="Liberation Mono, monospace">{n}</text>
          <text x={x + 24} y="1674" fontSize="9.500" textLength="24" lengthAdjust="spacingAndGlyphs" textAnchor="middle" fill="#00acac" fontFamily="Liberation Mono, monospace">LM393</text>
          <Pads xs={[x + 5, x + 42]} ys={[1621, 1634, 1646, 1659]} />
        </g>
      );
    })}
    <path d="M1786 1617H1822M1884 1627H1940M1984 1627H2030M2080 1617H2125M1828 1665H1880M1884 1640L1940 1616M2030 1652L2050 1654H2125V1620" stroke="#7d0000" strokeWidth="1.300" />
    <g fontSize="9" textAnchor="middle" fontFamily="Liberation Mono, monospace">
      <text x="1248" y="1631" fill="#009c9c">74F377</text>
      <text x="1329" y="1655" fill="#c0c0c0">74F181</text>
      <text x="1428" y="1655" fill="#c0c0c0">74F181</text>
    </g>
  </svg>
);

/* ---------- dialog ---------- */

const tree: [string, boolean][] = [
  ['Layers', true],
  ['Text & Graphics', false],
  ['Design Rules', true],
  ['Net Classes', false],
  ['Tracks & Vias', false],
  ['Solder Mask/Paste', false],
];

const rules: { label: string; value: string; row: string; text: string }[] = [
  { label: 'Minimum track width:', value: '3.5', row: 'mb-[44px]', text: 'pt-[2px]' },
  { label: 'Minimum via diameter:', value: '17.71654', row: 'mb-[8px]', text: 'pt-[2px]' },
  { label: 'Minimum via drill:', value: '7.874016', row: 'mb-[44px]', text: 'pt-[13px]' },
  { label: 'Minimum uVia diameter:', value: '7.874016', row: 'mb-[8px]', text: 'pb-[7px]' },
  { label: 'Minimum uVia drill:', value: '3.937008', row: 'mb-[44px]', text: 'pt-[2px]' },
  { label: 'Minimum hole to hole:', value: '5', row: '', text: 'pt-[2px]' },
];

const Option = ({ on, children, cls }: P & { on: boolean; cls: string }) => (
  <div className={`flex h-[28px] items-center ${cls}`}>
    <Check on={on} />
    <span className="pt-[3px] pl-[8px] text-[25.3px] leading-[30px] tracking-[0.13px] text-[#262626]">{children}</span>
  </div>
);

const Dialog = () => (
  <div className="absolute top-[278px] left-[426px] flex h-[1262px] w-[2508px] flex-col overflow-hidden rounded-[11px] bg-[#ebebeb]">
    <div className="relative flex h-[44px] shrink-0 items-center justify-center border-b-2 border-[#a9a9a9] bg-linear-to-b from-[#e6e6e6] to-[#cecece]">
      <div className="absolute top-[10px] left-[16px] flex gap-[16px]">
        <div className="size-[24px] rounded-full border border-[#d9574d] bg-[#ee6a5f]" />
        <div className="size-[24px] rounded-full border border-[#b9b9b9] bg-[#d0d0d0]" />
        <div className="size-[24px] rounded-full border border-[#4fae42] bg-[#61c554]" />
      </div>
      <span className="pt-[4px] pr-[2px] text-[25.3px] leading-[36px] tracking-[0.2px] text-[#404040]">Board Setup</span>
    </div>
    <div className="flex h-[1110px] shrink-0 pt-[21px] pl-[21px]">
      <div className="h-[1088px] w-[350px] shrink-0 border-2 border-[#b4b4b4] bg-white py-[5px]">
        {tree.map(([name, group]) => (
          <div key={name} className={name === 'Design Rules' ? 'flex h-[38px] items-center bg-[#1e52c9] text-white' : 'flex h-[38px] items-center text-black'}>
            {group ? <div className="mb-[4px] ml-[27px] h-0 w-0 border-x-[9px] border-t-[15px] border-x-transparent border-t-[#8c8c8c]" /> : null}
            <span className={group ? 'pt-[4px] pl-[22px] text-[25.3px]' : 'pt-[4px] pl-[97px] text-[25.3px]'}>{name}</span>
          </div>
        ))}
      </div>
      <div className="w-[712px] shrink-0 pt-[13px] pl-[25px]">
        <Option on={false} cls="">Allow blind/buried vias</Option>
        <Option on={false} cls="mt-[18px]">Allow micro vias (μVias)</Option>
        <Option on={false} cls="mt-[38px]">Require courtyard definitions in footprints</Option>
        <Option on cls="mt-[18px]">Prohibit overlapping courtyards</Option>
      </div>
      <div className="flex flex-col pt-[10px]">
        {rules.map((r) => (
          <div key={r.label} className={`flex h-[42px] items-center text-[25.3px] leading-[30px] ${r.row}`}>
            <span className={`w-[308px] pl-[1px] tracking-[0.05px] ${r.text}`}>{r.label}</span>
            <div className="flex h-[42px] w-[238px] items-center border-[1.5px] border-[#b0b0b0] bg-white pt-[6px] pl-[6px] tracking-[0.3px]">{r.value}</div>
            <span className={`pl-[15px] ${r.text}`}>mils</span>
          </div>
        ))}
      </div>
    </div>
    <div className="mx-[24px] mt-[20px] h-[2px] shrink-0 bg-[#d7d7d7]" />
    <div className="mt-[23px] flex items-center pr-[27px] pl-[32px] text-[25.3px] leading-[30px] tracking-[0.15px]">
      <div className="flex h-[39px] w-[236px] items-center justify-center rounded-[8px] bg-white pt-[4px] text-[#262626] shadow-[0_0_0_1px_rgba(0,0,0,0.14),0_2px_2px_rgba(0,0,0,0.2)]">Import Settings...</div>
      <div className="grow" />
      <div className="flex h-[39px] w-[165px] items-center justify-center rounded-[8px] bg-white pt-[4px] text-[#262626] shadow-[0_0_0_1px_rgba(0,0,0,0.14),0_2px_2px_rgba(0,0,0,0.2)]">Cancel</div>
      <div className="ml-[27px] flex h-[39px] w-[165px] items-center justify-center rounded-[8px] bg-linear-to-b from-[#68a7f9] to-[#1867f4] pt-[4px] text-white shadow-[0_1px_1px_rgba(0,0,0,0.3)]">OK</div>
    </div>
  </div>
);

const stats: [string, string, string][] = [
  ['Pads', '2130', 'w-[112.500px]'],
  ['Vias', '293', 'w-[104px]'],
  ['Track Segments', '6410', 'w-[228px]'],
  ['Nodes', '2056', 'w-[128.500px]'],
  ['Nets', '355', 'w-[107.500px]'],
  ['Unrouted', '0', 'w-[120px]'],
];

export default function App() {
  return (
    <div className="h-[2044px] w-[3584px] overflow-hidden bg-white pt-[76px] pl-[112px] font-['Inter',sans-serif] text-black">
      <div className="relative h-[1820px] w-[3360px] rounded-[11px] shadow-[0_0_0_1px_rgba(0,0,0,0.22),0_50px_100px_rgba(0,0,0,0.42)]">
        <div className="flex h-[1820px] w-[3360px] flex-col overflow-hidden rounded-[11px] bg-[#ebebeb]">
          {/* title bar */}
          <div className="relative flex h-[44px] shrink-0 items-center justify-center border-b-2 border-[#a4a4a4] bg-linear-to-b from-[#e4e4e4] to-[#cdcdcd]">
            <div className="absolute top-[10px] left-[16px] flex gap-[16px]">
              <div className="size-[24px] rounded-full border border-[#ababab] bg-[#cdcdcd]" />
              <div className="size-[24px] rounded-full border border-[#ababab] bg-[#cdcdcd]" />
              <div className="size-[24px] rounded-full border border-[#ababab] bg-[#cdcdcd]" />
            </div>
            <span className="pt-[3px] text-[25.3px] leading-[36px] tracking-[0.06px] text-[#484848]">Pcbnew — /Users/andrewfox/src/TurtleTTL/Schematics/MainBoard/MainBoard.kicad_pcb</span>
          </div>

          {/* main toolbar */}
          <div className="flex h-[72px] shrink-0 items-center gap-[16px] border-b border-[#6f6f6f] pl-[16px]">
            {topItems.map((k, i) => (k === '|' ? <VSep key={i} /> : <Svg key={i}>{top[k]}</Svg>))}
            <div className="-ml-[1px] flex h-[43px] w-[229px] items-center border-2 border-[#a6a6a6] bg-white pl-[8px]">
              <div className="size-[28px] border-2 border-black bg-[#8a2010]" />
              <span className="pt-[4px] pl-[11px] text-[25.3px] leading-[36px]">F.Cu (PgUp)</span>
            </div>
            <div className="-ml-[8px] flex h-[39px] w-[39px] items-center justify-center rounded-[8px] bg-white shadow-[0_0_0_1px_rgba(0,0,0,0.14),0_2px_2px_rgba(0,0,0,0.2)]">
              <svg viewBox="0 0 18 12" className="h-[12px] w-[18px]" fill="none" stroke="#333" strokeWidth="2.800" strokeLinecap="round" strokeLinejoin="round">
                <path d="M2 2L9 9.500L16 2" />
              </svg>
            </div>
            <div className="-ml-[5px] flex items-center gap-[16px]">
              <Svg>{top.copper}</Svg>
              <div className="-ml-[2px]"><VSep /></div>
              <Svg>{top.sch}</Svg>
              <VSep />
              <Svg>{top.term}</Svg>
            </div>
          </div>

          {/* auxiliary toolbar */}
          <div className="flex h-[72px] shrink-0 items-center border-b border-[#6f6f6f] pl-[10px]">
            <Select w="w-[454px] tracking-[0.1px]">Track: 5.00 mils (0.127 mm) *</Select>
            <div className="w-[6px]" />
            <Select w="w-[554px] tracking-[0.1px]">Via: 17.7 / 7.9 mils (0.45 / 0.20 mm) *</Select>
            <div className="w-[12px]" />
            <VSep />
            <div className="w-[16px]" />
            <Svg>{top.diff}</Svg>
            <div className="w-[16px]" />
            <VSep />
            <div className="w-[10px]" />
            <Select w="w-[486px] tracking-[0.26px]">Grid: 5.00 mils (0.1270 mm)</Select>
            <div className="w-[12px]" />
            <VSep />
            <div className="w-[10px]" />
            <Select w="w-[272px]">Zoom Auto</Select>
          </div>

          {/* work area */}
          <div className="flex h-[1542px] shrink-0">
            <div className="flex w-[72px] shrink-0 flex-col items-center gap-[4px] border-r border-b border-[#6f6f6f] pt-[10px]">
              <Column items={leftItems} icons={left} />
            </div>
            <div className="flex w-[2886px] shrink-0 bg-[#f0f0f0] pt-[2px] pl-[2px]">
              <div className="flex w-[2854px] shrink-0 flex-col">
                <Canvas />
                <div className="mt-[4px] flex h-[26px] items-center bg-[#fafafa] pt-[2px]">
                  <div className="ml-[1807px] h-[16px] w-[547px] rounded-full bg-[#c1c1c1]" />
                </div>
              </div>
              <div className="h-[1512px] w-[26px] bg-[#fafafa] pt-[906px]">
                <div className="ml-[6px] h-[77px] w-[16px] rounded-full bg-[#c1c1c1]" />
              </div>
            </div>
            <div className="flex w-[72px] shrink-0 flex-col items-center gap-[4px] border-r border-b border-[#6f6f6f] pt-[10px]">
              <Column items={rightItems} icons={right} />
            </div>
            <div className="flex w-[14px] shrink-0 flex-col items-center pt-[762px]">
              <div className="flex h-[20px] w-full items-center justify-center border-y border-[#d5d5d5] bg-white">
                <div className="size-[12px] rounded-full border border-[#b5b5b5] bg-[#d8d8d8]" />
              </div>
            </div>

            {/* layers manager */}
            <div className="flex w-[315px] shrink-0 flex-col">
              <div className="h-[34px] shrink-0 bg-linear-to-b from-[#dadada] to-[#cacaca] pl-[6px] text-[21.4px] leading-[32px] tracking-[0.200px]">Layers Manager</div>
              <div className="flex grow flex-col border-2 border-[#b6b6b6]">
                <div className="flex h-[44px] shrink-0 items-end border-b border-[#b0b0b0] bg-linear-to-b from-[#c9c9c9] to-[#efefef] pl-[10px] text-[21.4px] leading-[30px] tracking-[0.200px]">
                  <div className="flex h-[36px] w-[101px] items-center justify-center rounded-t-[5px] border-2 border-b-0 border-[#b0b0b0] bg-linear-to-b from-white to-[#ececec] pt-[1px]">Layers</div>
                  <div className="flex h-[36px] w-[89px] items-center justify-center rounded-t-[5px] border-2 border-b-0 border-l-0 border-[#b0b0b0] bg-linear-to-b from-[#ececec] to-[#dedede] pt-[1px]">Items</div>
                </div>
                <div className="h-[5px] shrink-0 border-b border-[#bdbdbd]" />
                <div className="pt-[5px]">
                  {layers.map(([name, color, on], i) => (
                    <div key={name} className="flex h-[36px] items-center pl-[14px]">
                      <div className={i === 0 ? 'mb-[3px] h-0 w-0 border-y-[11px] border-l-[12px] border-y-transparent border-l-[#5468f5]' : 'w-[12px]'} />
                      <div className="mb-[2px] ml-[4px] h-[22px] w-[32px] border-2 border-black" style={{ backgroundColor: color }} />
                      <div className="ml-[6px]"><Check on={on} /></div>
                      <span className="pt-[5px] pl-[18px] text-[21.4px] leading-[30px] tracking-[0.200px]">{name}</span>
                    </div>
                  ))}
                </div>
              </div>
            </div>
          </div>

          {/* message panel */}
          <div className="flex h-[54px] shrink-0 border-b-2 border-[#bdbdbd] pt-[3px] pl-[22px] text-[21.400px] leading-[26px] tracking-[0.200px]">
            {stats.map(([a, b, w]) => (
              <div key={a} className={`flex flex-col whitespace-nowrap ${w}`}>
                <span>{a}</span>
                <span>{b}</span>
              </div>
            ))}
          </div>

          {/* status bar */}
          <div className="flex h-[36px] shrink-0 border-t-2 border-white pl-[1944px] text-[21.400px] leading-[28px] tracking-[0.430px] whitespace-pre">
            <span className="w-[122px]">Z 0.68</span>
            <span className="w-[362px]">X 2.840000  Y 2.620000</span>
            <span className="w-[558px]">dx 2.840000  dy 2.620000  dist 3.8639</span>
            <span className="tracking-[0.200px]">Inches</span>
          </div>
        </div>

        {/* dialog shadow stays inside the work area */}
        <div className="pointer-events-none absolute top-[188px] left-[72px] h-[1542px] w-[2958px] overflow-hidden">
          <div className="absolute top-[90px] left-[354px] h-[1262px] w-[2508px] rounded-[11px] shadow-[0_0_0_1px_rgba(0,0,0,0.22),0_50px_100px_rgba(0,0,0,0.42)]" />
        </div>
        <Dialog />
      </div>
    </div>
  );
}
